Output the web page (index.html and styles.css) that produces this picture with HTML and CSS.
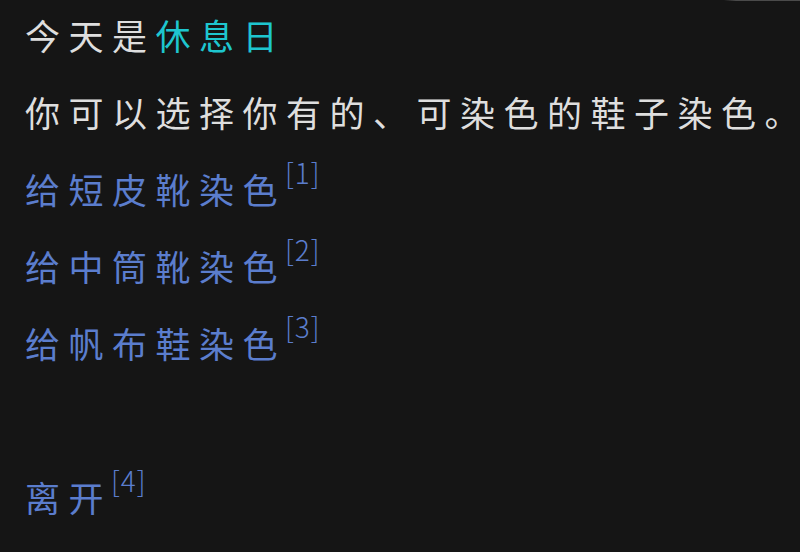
FILE: index.html
```html
<!DOCTYPE html>
<html lang="zh">
<head>
<meta charset="utf-8">
<title>休息日</title>
<link rel="stylesheet" href="styles.css">
</head>
<body>
<div class="edge"></div>
<main class="story">
  <p class="line">今天是<span class="hl">休息日</span></p>
  <p class="line">你可以选择你有的、可染色的鞋子染色<span class="end">。</span></p>
  <p class="line choice">给短皮靴染色<sup class="ref">[1]</sup></p>
  <p class="line choice">给中筒靴染色<sup class="ref">[2]</sup></p>
  <p class="line choice">给帆布鞋染色<sup class="ref">[3]</sup></p>
  <p class="line blank"></p>
  <p class="line choice">离开<sup class="ref">[4]</sup></p>
</main>
</body>
</html>
```
FILE: styles.css
```css
html, body {
  margin: 0;
  height: 100%;
  background: #151515;
  overflow: hidden;
}

body {
  font-family: "Noto Sans CJK SC", "Noto Sans", sans-serif;
  font-weight: 400;
  color: #dedede;
}

.edge {
  position: absolute;
  top: 0;
  right: 0;
  width: 76px;
  height: 1px;
  background: linear-gradient(to right, rgba(80, 80, 80, 0), #4a4a4a 12px);
}

.story {
  display: flex;
  flex-direction: column;
  gap: 33px;
  padding: 13px 0 0 25px;
}

.line {
  margin: 0;
  height: 44px;
  line-height: 44px;
  font-size: 35px;
  letter-spacing: 8.5px;
  white-space: nowrap;
}

.end {
  letter-spacing: 0;
}

.hl {
  color: #1ec6cf;
}

.choice {
  color: #5b7dcd;
}

.ref {
  font-size: 28px;
  font-weight: 300;
  letter-spacing: 1px;
  line-height: 0;
  vertical-align: 20px;
  margin-left: -1px;
}
```
